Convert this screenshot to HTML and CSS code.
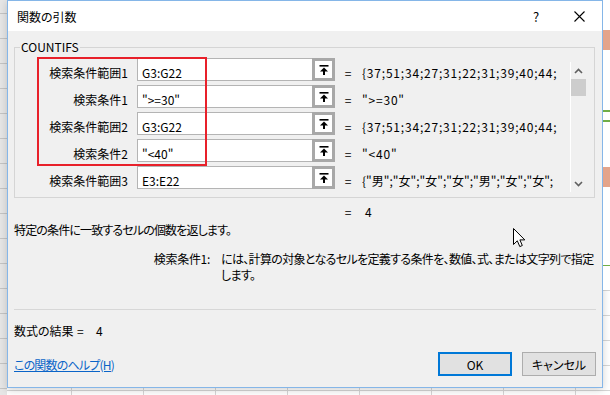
FILE: index.html
```html
<!DOCTYPE html>
<html lang="ja">

<head>
    <meta charset="UTF-8" />
    <title>関数の引数</title>
    <link rel="stylesheet" href="styles.css">
</head>

<body>
    <div class="sheet-left"></div>

    <div class="dialog">
        <div class="titlebar">
            <span class="title">関数の引数</span>
            <span class="help-btn">?</span>
            <span class="close-btn">
                <svg width="11" height="11" viewBox="0 0 11 11">
                    <path d="M0.5 0.5 L10.5 10.5 M10.5 0.5 L0.5 10.5" stroke="#000" stroke-width="1.1" fill="none" />
                </svg>
            </span>
        </div>

        <div class="dialog-body">
            <fieldset class="args">
                <legend>COUNTIFS</legend>
                <div class="args-inner">
                    <div class="arg-rows">
                        <div class="arg-row">
                            <span class="arg-label">検索条件範囲1</span>
                            <span class="arg-input">G3:G22</span>
                            <span class="ref-btn"><svg width="10" height="10" viewBox="0 0 10 10"><rect x="0.5" y="0" width="9" height="1.6" /><polygon points="5,2.4 1,6.4 9,6.4" /><rect x="4" y="6" width="2" height="4" /></svg></span>
                            <span class="arg-eq">=</span>
                            <span class="arg-value">{37;51;34;27;31;22;31;39;40;44;</span>
                        </div>
                        <div class="arg-row">
                            <span class="arg-label">検索条件1</span>
                            <span class="arg-input">"&gt;=30"</span>
                            <span class="ref-btn"><svg width="10" height="10" viewBox="0 0 10 10"><rect x="0.5" y="0" width="9" height="1.6" /><polygon points="5,2.4 1,6.4 9,6.4" /><rect x="4" y="6" width="2" height="4" /></svg></span>
                            <span class="arg-eq">=</span>
                            <span class="arg-value">"&gt;=30"</span>
                        </div>
                        <div class="arg-row">
                            <span class="arg-label">検索条件範囲2</span>
                            <span class="arg-input">G3:G22</span>
                            <span class="ref-btn"><svg width="10" height="10" viewBox="0 0 10 10"><rect x="0.5" y="0" width="9" height="1.6" /><polygon points="5,2.4 1,6.4 9,6.4" /><rect x="4" y="6" width="2" height="4" /></svg></span>
                            <span class="arg-eq">=</span>
                            <span class="arg-value">{37;51;34;27;31;22;31;39;40;44;</span>
                        </div>
                        <div class="arg-row">
                            <span class="arg-label">検索条件2</span>
                            <span class="arg-input">"&lt;40"</span>
                            <span class="ref-btn"><svg width="10" height="10" viewBox="0 0 10 10"><rect x="0.5" y="0" width="9" height="1.6" /><polygon points="5,2.4 1,6.4 9,6.4" /><rect x="4" y="6" width="2" height="4" /></svg></span>
                            <span class="arg-eq">=</span>
                            <span class="arg-value">"&lt;40"</span>
                        </div>
                        <div class="arg-row">
                            <span class="arg-label">検索条件範囲3</span>
                            <span class="arg-input">E3:E22</span>
                            <span class="ref-btn"><svg width="10" height="10" viewBox="0 0 10 10"><rect x="0.5" y="0" width="9" height="1.6" /><polygon points="5,2.4 1,6.4 9,6.4" /><rect x="4" y="6" width="2" height="4" /></svg></span>
                            <span class="arg-eq">=</span>
                            <span class="arg-value tight">{"男";"女";"女";"女";"男";"女";"女";</span>
                        </div>

                        <!-- annotation box -->
                        <div class="highlight"></div>
                    </div>

                    <div class="scrollbar">
                        <span class="scroll-arrow"><svg width="9" height="6" viewBox="0 0 9 6"><polyline points="1,5 4.5,1.5 8,5" fill="none" stroke="#606060" stroke-width="1.6" /></svg></span>
                        <span class="scroll-thumb"></span>
                        <span class="scroll-space"></span>
                        <span class="scroll-arrow"><svg width="9" height="6" viewBox="0 0 9 6"><polyline points="1,1 4.5,4.5 8,1" fill="none" stroke="#606060" stroke-width="1.6" /></svg></span>
                    </div>
                </div>
            </fieldset>

            <div class="total"><span class="arg-eq">=</span><span class="total-value">4</span></div>

            <p class="func-desc">特定の条件に一致するセルの個数を返します。</p>

            <div class="arg-desc">
                <span class="arg-desc-name">検索条件1:</span>
                <span class="arg-desc-text">には、計算の対象となるセルを定義する条件を、数値、式、または文字列で指定<br>します。</span>
            </div>

            <div class="separator"></div>

            <div class="result">
                <span class="result-label">数式の結果</span><span class="result-eq">=</span><span class="result-value">4</span>
            </div>

            <div class="footer">
                <a class="help-link" href="#">この関数のヘルプ(H)</a>
                <div class="buttons">
                    <button class="btn btn-ok">OK</button>
                    <button class="btn">キャンセル</button>
                </div>
            </div>
        </div>
    </div>

    <div class="sheet-right"></div>

    <svg class="cursor" width="13" height="20" viewBox="0 0 13 20">
        <path d="M0.5 0.5 L0.5 16.5 L4.3 12.8 L6.8 18.6 L9.3 17.5 L6.9 11.9 L11.8 11.9 Z" fill="#fff" stroke="#000" stroke-width="1" />
    </svg>
</body>

</html>
```

FILE: styles.css
```css
body {
    margin: 0;
    width: 610px;
    height: 395px;
    overflow: hidden;
    display: flex;
    align-items: flex-start;
    font-family: "Noto Sans CJK JP", "Noto Sans", sans-serif;
    font-size: 12px;
    font-feature-settings: "palt";
    color: #000;
    background-color: #fff;
    background-image:
        repeating-linear-gradient(to bottom, transparent 0 15px, #d6d6d6 15px 16px, transparent 16px 25px),
        repeating-linear-gradient(to right, transparent 0 71px, #d6d6d6 71px 72px);
}

/* spreadsheet behind the dialog */
.sheet-left {
    width: 7px;
    height: 395px;
    flex-shrink: 0;
    background-color: #e6e6e6;
    background-image: repeating-linear-gradient(to bottom, transparent 0 13px, #c4c4c4 13px 14px, transparent 14px 25px);
}

.sheet-right {
    flex: 1;
    height: 290px;
    background: linear-gradient(to bottom,
            #fff 0 30px, #e4a48a 30px 50px, #fff 50px 110px,
            #70ad47 110px 112px, #fff 112px 120px, #70ad47 120px 122px,
            #fff 122px 167px, #e4a48a 167px 187px, #fff 187px 265px,
            #70ad47 265px 266px, #fff 266px);
}

.dialog {
    width: 596px;
    height: 388px;
    flex-shrink: 0;
    box-sizing: border-box;
    border: 1px solid #85b6e8;
    background: #f0f0f0;
    display: flex;
    flex-direction: column;
    box-shadow: 0 2px 8px rgba(0, 0, 0, 0.18);
}

.titlebar {
    height: 30px;
    background: #fff;
    display: flex;
    align-items: center;
}

.title {
    padding-left: 9px;
    flex: 1;
}

.help-btn {
    width: 40px;
    text-align: center;
    font-size: 13px;
}

.close-btn {
    width: 46px;
    display: flex;
    justify-content: center;
}

.dialog-body {
    flex: 1;
    padding-top: 8px;
    display: flex;
    flex-direction: column;
}

/* argument group */
.args {
    width: 581px;
    box-sizing: border-box;
    margin: 0 0 0 6px;
    padding: 3px 8px 4px 0;
    border: 1px solid #d5d5d5;
    min-width: 0;
}

.args legend {
    margin-left: 5px;
    padding: 0 1px;
    line-height: 16px;
}

.args-inner {
    display: flex;
}

.arg-rows {
    position: relative;
    width: 545px;
}

.arg-row {
    display: flex;
    height: 27px;
}

.arg-label {
    width: 113px;
    margin-right: 9px;
    text-align: right;
    padding-top: 7px;
    line-height: 16px;
}

.arg-input {
    width: 175px;
    height: 23px;
    box-sizing: border-box;
    border: 1px solid #b4b4b4;
    border-right: none;
    background: #fff;
    padding: 6px 0 0 4px;
    line-height: 16px;
    white-space: nowrap;
}

.ref-btn {
    width: 23px;
    height: 23px;
    box-sizing: border-box;
    border: 3px solid #a8a8a8;
    background: #fff;
    display: flex;
    align-items: center;
    justify-content: center;
}

.arg-eq {
    width: 26px;
    text-align: center;
    padding-top: 7px;
    line-height: 16px;
}

.arg-value {
    width: 198px;
    margin-left: 1px;
    padding-top: 7px;
    line-height: 16px;
    white-space: nowrap;
    overflow: hidden;
    letter-spacing: 0.8px;
}

.arg-value.tight {
    letter-spacing: 0;
}

.highlight {
    position: absolute;
    left: 22px;
    top: -1px;
    width: 170px;
    height: 109px;
    box-sizing: border-box;
    border: 2px solid #e8202a;
}

.scrollbar {
    width: 16px;
    height: 130px;
    margin: 4px 0 0 10px;
    box-sizing: border-box;
    border-left: 1px solid #fff;
    display: flex;
    flex-direction: column;
}

.scroll-arrow {
    height: 17px;
    display: flex;
    align-items: center;
    justify-content: center;
}

.scroll-thumb {
    height: 17px;
    background: #cdcdcd;
}

.scroll-space {
    flex: 1;
}

/* texts under the group */
.total {
    display: flex;
    margin-top: 6px;
    padding-left: 327px;
    line-height: 16px;
}

.total .arg-eq {
    padding-top: 0;
}

.total-value {
    padding-left: 4px;
}

.func-desc {
    margin: 2px 0 0 6px;
    line-height: 16px;
    letter-spacing: -0.85px;
}

.arg-desc {
    display: flex;
    margin-top: 13px;
    padding-left: 144px;
    line-height: 16px;
}

.arg-desc-name {
    width: 58px;
    flex-shrink: 0;
    white-space: nowrap;
    text-align: right;
    margin-right: 11px;
    letter-spacing: -0.3px;
}

.arg-desc-text {
    white-space: nowrap;
    letter-spacing: -0.65px;
}

.separator {
    height: 1px;
    margin: 26px 6px 0 6px;
    background: #d7d7d7;
}

.result {
    display: flex;
    margin: 13px 0 0 6px;
    line-height: 16px;
}

.result-label {
    width: 63px;
}

.result-eq {
    width: 19px;
}

.footer {
    display: flex;
    align-items: center;
    justify-content: space-between;
    margin-top: 13px;
    padding: 0 6px;
}

.help-link {
    color: #0a64c8;
    text-decoration: underline;
    letter-spacing: -0.8px;
}

.buttons {
    display: flex;
    gap: 10px;
}

.btn {
    width: 74px;
    height: 24px;
    box-sizing: border-box;
    border: 1px solid #adadad;
    background: #e1e1e1;
    font-family: inherit;
    font-size: 12px;
    font-feature-settings: "palt";
    padding: 0;
    color: #000;
}

.btn-ok {
    border: 2px solid #0078d7;
}

.cursor {
    position: absolute;
    left: 513px;
    top: 228px;
}
```
